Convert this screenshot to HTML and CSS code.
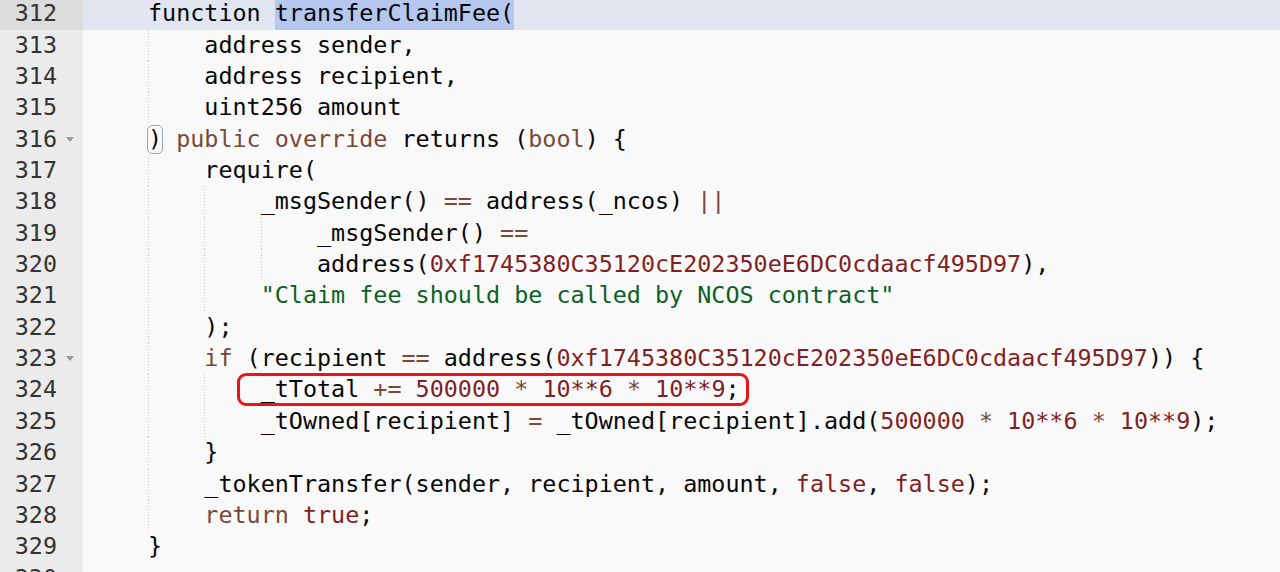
FILE: index.html
```html
<!DOCTYPE html>
<html>
<head>
<meta charset="utf-8">
<link rel="stylesheet" href="styles.css">
</head>
<body>
<div class="editor">
  <div class="gutter">
    <div class="gl active"><span class="num">312</span><span class="fold"></span></div>
    <div class="gl"><span class="num">313</span><span class="fold"></span></div>
    <div class="gl"><span class="num">314</span><span class="fold"></span></div>
    <div class="gl"><span class="num">315</span><span class="fold"></span></div>
    <div class="gl"><span class="num">316</span><span class="fold open"></span></div>
    <div class="gl"><span class="num">317</span><span class="fold"></span></div>
    <div class="gl"><span class="num">318</span><span class="fold"></span></div>
    <div class="gl"><span class="num">319</span><span class="fold"></span></div>
    <div class="gl"><span class="num">320</span><span class="fold"></span></div>
    <div class="gl"><span class="num">321</span><span class="fold"></span></div>
    <div class="gl"><span class="num">322</span><span class="fold"></span></div>
    <div class="gl"><span class="num">323</span><span class="fold open"></span></div>
    <div class="gl"><span class="num">324</span><span class="fold"></span></div>
    <div class="gl"><span class="num">325</span><span class="fold"></span></div>
    <div class="gl"><span class="num">326</span><span class="fold"></span></div>
    <div class="gl"><span class="num">327</span><span class="fold"></span></div>
    <div class="gl"><span class="num">328</span><span class="fold"></span></div>
    <div class="gl"><span class="num">329</span><span class="fold"></span></div>
    <div class="gl"><span class="num">330</span><span class="fold"></span></div>
  </div>
  <div class="code">
<div class="line active"><span class="ig0">    </span>function <span class="sel">transferClaimFee(</span></div>
<div class="line"><span class="ig0">    </span><span class="ig">    </span>address sender,</div>
<div class="line"><span class="ig0">    </span><span class="ig">    </span>address recipient,</div>
<div class="line"><span class="ig0">    </span><span class="ig">    </span>uint256 amount</div>
<div class="line"><span class="ig0">    </span><span class="br">)</span> <span class="k">public</span> <span class="k">override</span> returns (<span class="k">bool</span>) {</div>
<div class="line"><span class="ig0">    </span><span class="ig">    </span>require(</div>
<div class="line"><span class="ig0">    </span><span class="ig">    </span><span class="ig">    </span>_msgSender() <span class="k">==</span> address(_ncos) <span class="k">||</span></div>
<div class="line"><span class="ig0">    </span><span class="ig">    </span><span class="ig">    </span><span class="ig">    </span>_msgSender() <span class="k">==</span></div>
<div class="line"><span class="ig0">    </span><span class="ig">    </span><span class="ig">    </span><span class="ig">    </span>address(<span class="n">0xf1745380C35120cE202350eE6DC0cdaacf495D97</span>),</div>
<div class="line"><span class="ig0">    </span><span class="ig">    </span><span class="ig">    </span><span class="s">"Claim fee should be called by NCOS contract"</span></div>
<div class="line"><span class="ig0">    </span><span class="ig">    </span>);</div>
<div class="line"><span class="ig0">    </span><span class="ig">    </span><span class="k">if</span> (recipient <span class="k">==</span> address(<span class="n">0xf1745380C35120cE202350eE6DC0cdaacf495D97</span>)) {</div>
<div class="line marked"><span class="ig0">    </span><span class="ig">    </span><span class="ig">    </span>_tTotal <span class="k">+=</span> <span class="n">500000</span> <span class="k">*</span> <span class="n">10**6</span> <span class="k">*</span> <span class="n">10**9</span>;<span class="redbox"></span></div>
<div class="line"><span class="ig0">    </span><span class="ig">    </span><span class="ig">    </span>_tOwned[recipient] <span class="k">=</span> _tOwned[recipient].add(<span class="n">500000</span> <span class="k">*</span> <span class="n">10**6</span> <span class="k">*</span> <span class="n">10**9</span>);</div>
<div class="line"><span class="ig0">    </span><span class="ig">    </span>}</div>
<div class="line"><span class="ig0">    </span><span class="ig">    </span>_tokenTransfer(sender, recipient, amount, <span class="c">false</span>, <span class="c">false</span>);</div>
<div class="line"><span class="ig0">    </span><span class="ig">    </span><span class="k">return</span> <span class="c">true</span>;</div>
<div class="line"><span class="ig0">    </span>}</div>
<div class="line"> </div>
  </div>
</div>
</body>
</html>
```

FILE: styles.css
```css
html, body {
  margin: 0;
  padding: 0;
  width: 1280px;
  height: 572px;
  overflow: hidden;
  background: #f9f9f9;
}

.editor {
  display: flex;
  margin-top: -1.65px;
  font-family: "DejaVu Sans Mono", "Liberation Mono", monospace;
  font-size: 23.4px;
  line-height: 31.35px;
  color: #080808;
}

.gutter {
  width: 83px;
  flex: none;
  background: #ebebeb;
  color: #333;
}

.gl {
  height: 31.35px;
  display: flex;
  justify-content: flex-end;
  align-items: center;
}

.gl.active {
  background: #dcdcdc;
}

.num {
  line-height: 31.35px;
}

.fold {
  width: 26px;
  height: 31.35px;
  position: relative;
}

.fold.open::after {
  content: "";
  position: absolute;
  left: 9px;
  top: 13px;
  width: 0;
  height: 0;
  border-left: 4px solid transparent;
  border-right: 4px solid transparent;
  border-top: 5px solid #9a9a9a;
}

.code {
  flex: 1;
  min-width: 0;
}

.line {
  height: 31.35px;
  padding-left: 8.7px;
  white-space: pre;
}

.line.active {
  background: #e2e6f0;
}

.line.marked {
  position: relative;
}

.ig0, .ig {
  display: inline-block;
  width: 4ch;
  height: 31.35px;
  vertical-align: top;
}

.ig {
  background-image: repeating-linear-gradient(to bottom, #c9c9c9 0 1px, transparent 1px 3px);
  background-size: 1px 100%;
  background-repeat: no-repeat;
  background-position: 0 0;
}

.sel {
  background: #b5c6ef;
  display: inline-block;
  height: 31.35px;
  vertical-align: top;
}

.br {
  display: inline-block;
  box-sizing: border-box;
  height: 29px;
  margin-top: 1px;
  vertical-align: top;
  line-height: 27px;
  border: 1.5px solid #9ea3b8;
  border-radius: 5px;
  margin-left: -1px;
  margin-right: -1px;
  width: calc(1ch + 2px);
}

.k { color: #794938; }
.n { color: #811f24; }
.c { color: #811f24; }
.s { color: #0b6125; }

.redbox {
  position: absolute;
  left: 154px;
  top: -1px;
  width: 512px;
  height: 33px;
  box-sizing: border-box;
  border: 3.5px solid #e8141c;
  border-radius: 9px;
}
```
